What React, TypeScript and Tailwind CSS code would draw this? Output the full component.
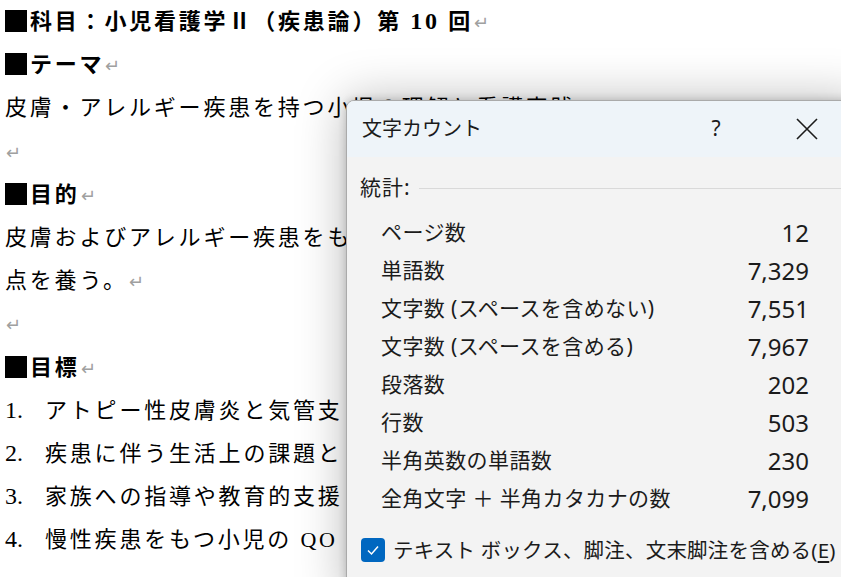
import React from "react";

const docFont = {
  fontFamily: '"Liberation Serif", "Noto Sans CJK JP", serif',
};
const uiFont = {
  fontFamily: '"Noto Sans", "Noto Sans CJK JP", sans-serif',
};
const cjk = { fontFamily: '"Noto Sans CJK JP", sans-serif' };

function Ret() {
  return <span className="text-[#a0a0a0] text-[18px] font-normal ml-[1px]" style={cjk}>↵</span>;
}

function Sq() {
  return (
    <span className="inline-block w-[22px] h-[22px] bg-black align-[-3px] mr-[3px]" />
  );
}

function Line({ children, bold }: { children?: React.ReactNode; bold?: boolean }) {
  return (
    <div className={`h-[43.2px] leading-[43.2px] whitespace-nowrap ${bold ? "font-bold" : ""}`}>
      {children}
    </div>
  );
}

function Item({ n, text }: { n: string; text: string }) {
  return (
    <Line>
      <span className="inline-block w-[40px] text-[24px] tracking-normal">{n}</span>
      {text}
    </Line>
  );
}

const rows: [string, string][] = [
  ["ページ数", "12"],
  ["単語数", "7,329"],
  ["文字数 (スペースを含めない)", "7,551"],
  ["文字数 (スペースを含める)", "7,967"],
  ["段落数", "202"],
  ["行数", "503"],
  ["半角英数の単語数", "230"],
  ["全角文字 ＋ 半角カタカナの数", "7,099"],
];

export default function App() {
  return (
    <div className="relative w-[841px] h-[577px] overflow-hidden bg-white">
      <div className="pl-[5px] text-[22px] tracking-[2.8px] text-black" style={docFont}>
        <Line bold>
          <Sq />科目：小児看護学Ⅱ（疾患論）第 <span className="text-[24px]">10</span> 回<Ret />
        </Line>
        <Line bold>
          <Sq />テーマ<Ret />
        </Line>
        <Line>
          皮膚・アレルギー疾患を持つ小児の理解と看護実践<Ret />
        </Line>
        <Line>
          <Ret />
        </Line>
        <Line bold>
          <Sq />目的<Ret />
        </Line>
        <Line>皮膚およびアレルギー疾患をも</Line>
        <Line>
          点を養う。<Ret />
        </Line>
        <Line>
          <Ret />
        </Line>
        <Line bold>
          <Sq />目標<Ret />
        </Line>
        <Item n="1." text="アトピー性皮膚炎と気管支" />
        <Item n="2." text="疾患に伴う生活上の課題と" />
        <Item n="3." text="家族への指導や教育的支援" />
        <Item n="4." text="慢性疾患をもつ小児の QO" />
      </div>

      <div
        className="absolute left-[346px] top-[100px] w-[520px] h-[500px] rounded-tl-[8px] border border-[#aaaaaa] bg-[#f3f3f3] overflow-hidden shadow-[0_0_50px_rgba(0,0,0,0.28),0_0_8px_rgba(0,0,0,0.2)] text-[#1b1b1b]"
        style={uiFont}
      >
        <div className="h-[56px] bg-[#eef4f9] flex items-center pl-[15px] pr-[35px]">
          <div className="flex-1 text-[20px]">文字カウント</div>
          <div className="w-[46px] text-center text-[21px]">?</div>
          <div className="w-[45px]" />
          <div className="w-[46px] flex items-center justify-center">
            <svg width="22" height="22" viewBox="0 0 22 22">
              <path d="M1 1 L21 21 M21 1 L1 21" stroke="#1b1b1b" strokeWidth="1.6" fill="none" />
            </svg>
          </div>
        </div>
        <div className="mt-[16px] h-[30px] flex items-center pl-[13px]">
          <span className="text-[21px] tracking-[1px]">統計:</span>
          <div className="ml-[8px] flex-1 h-px bg-[#d9d9d9]" />
        </div>
        <div className="mt-[11px] ml-[34px] w-[428px]">
          {rows.map(([k, v]) => (
            <div key={k} className="h-[38px] flex items-center justify-between">
              <span className="text-[21px] tracking-[0.4px]">{k}</span>
              <span className="text-[24px]">{v}</span>
            </div>
          ))}
        </div>
        <div className="mt-[20px] ml-[14px] h-[24px] flex items-center">
          <div className="w-[24px] h-[24px] rounded-[4px] bg-[#0067c0] flex items-center justify-center">
            <svg width="14" height="14" viewBox="0 0 14 14">
              <path d="M2 7.5 L5.5 11 L12 3.5" stroke="white" strokeWidth="1.5" fill="none" />
            </svg>
          </div>
          <span className="ml-[8px] text-[20.5px] tracking-[0.2px] whitespace-nowrap">
            テキスト ボックス、脚注、文末脚注を含める(<span className="underline underline-offset-[3px]">E</span>)
          </span>
        </div>
      </div>
    </div>
  );
}
